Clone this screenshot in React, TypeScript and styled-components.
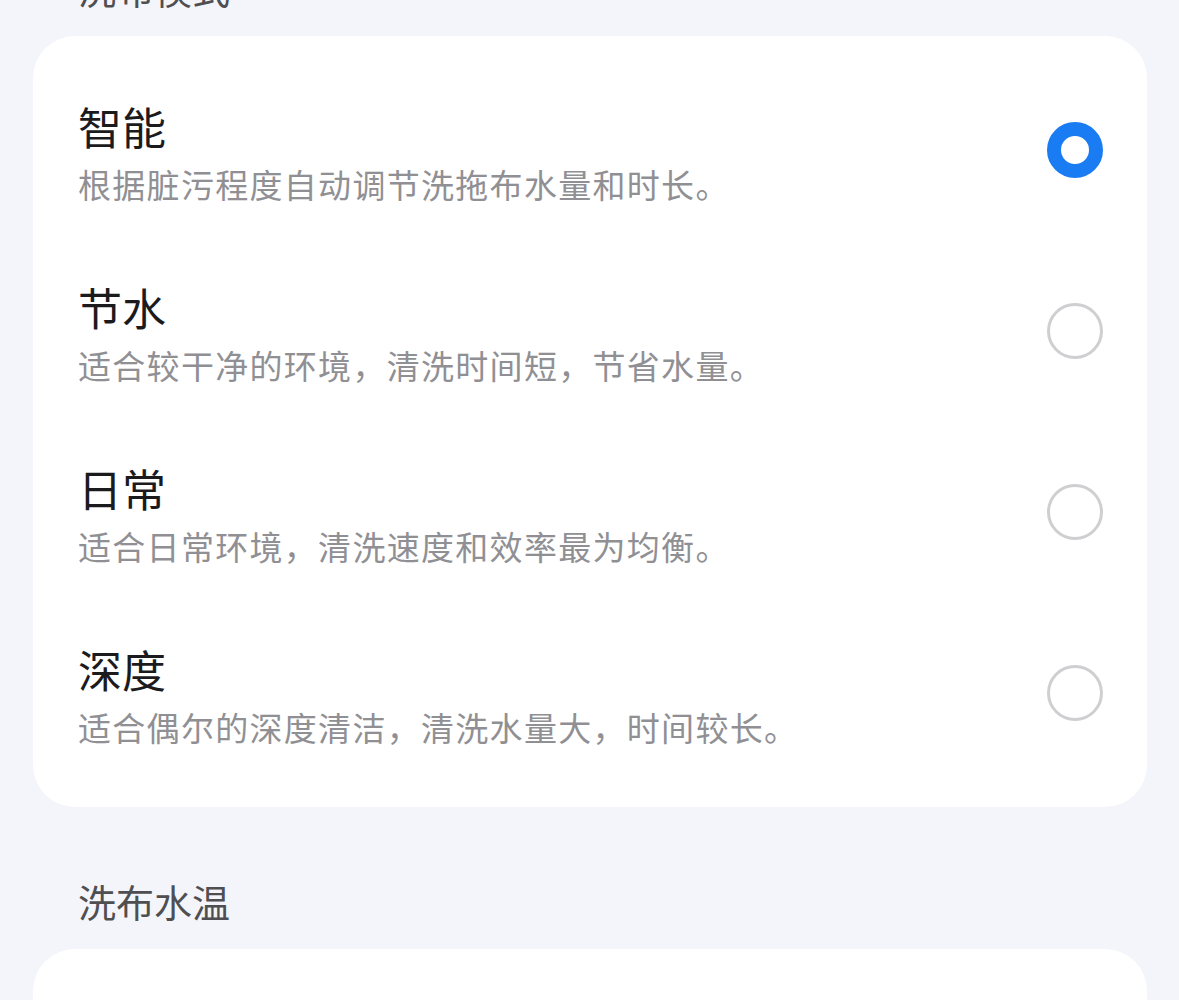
import styled, { createGlobalStyle } from "styled-components";
import { useState } from "react";

const GlobalStyle = createGlobalStyle`
	html, body {
		margin: 0;
		padding: 0;
		background: #f4f5fa;
	}
	body {
		font-family: "Noto Sans CJK SC", "Noto Sans", sans-serif;
		overflow: hidden;
	}
`;

const Page = styled.div`
	display: flex;
	flex-direction: column;
	padding: 0 32px 0 33px;
	margin-top: -37px;
	gap: 69px;
`;

const Section = styled.section`
	display: flex;
	flex-direction: column;
`;

const SectionLabel = styled.div`
	font-size: 38px;
	line-height: 50px;
	color: #4f4f52;
	padding: 0 0 23px 45px;
`;

const Card = styled.div<{ $minHeight?: number }>`
	background: #ffffff;
	border-radius: 42px;
	padding: 25px 44px 22px 45px;
	display: flex;
	flex-direction: column;
	min-height: ${(p) => (p.$minHeight ? `${p.$minHeight}px` : "auto")};
	box-sizing: border-box;
`;

const OptionRow = styled.div`
	display: flex;
	align-items: center;
	justify-content: space-between;
	padding: 35.5px 0;
	cursor: pointer;
`;

const OptionText = styled.div`
	display: flex;
	flex-direction: column;
	gap: 6px;
`;

const OptionTitle = styled.span`
	font-size: 44px;
	line-height: 58px;
	color: #1b1b1d;
`;

const OptionDesc = styled.span`
	font-size: 33px;
	line-height: 46px;
	letter-spacing: 1.3px;
	color: #909094;
`;

const Radio = styled.span<{ $checked: boolean }>`
	width: 56px;
	height: 56px;
	border-radius: 50%;
	box-sizing: border-box;
	flex-shrink: 0;
	margin-top: -4px;
	border: ${(p) => (p.$checked ? "14px solid #1a7cf2" : "3px solid #cfcfd2")};
	background: #ffffff;
`;

const modes = [
	{ title: "智能", desc: "根据脏污程度自动调节洗拖布水量和时长。" },
	{ title: "节水", desc: "适合较干净的环境，清洗时间短，节省水量。" },
	{ title: "日常", desc: "适合日常环境，清洗速度和效率最为均衡。" },
	{ title: "深度", desc: "适合偶尔的深度清洁，清洗水量大，时间较长。" },
];

export default function App() {
	const [selected, setSelected] = useState(0);

	return (
		<>
			<GlobalStyle />
			<Page>
				<Section>
					<SectionLabel>洗布模式</SectionLabel>
					<Card>
						{modes.map((mode, i) => (
							<OptionRow key={mode.title} onClick={() => setSelected(i)}>
								<OptionText>
									<OptionTitle>{mode.title}</OptionTitle>
									<OptionDesc>{mode.desc}</OptionDesc>
								</OptionText>
								<Radio $checked={selected === i} />
							</OptionRow>
						))}
					</Card>
				</Section>
				<Section>
					<SectionLabel>洗布水温</SectionLabel>
					<Card $minHeight={200} />
				</Section>
			</Page>
		</>
	);
}
